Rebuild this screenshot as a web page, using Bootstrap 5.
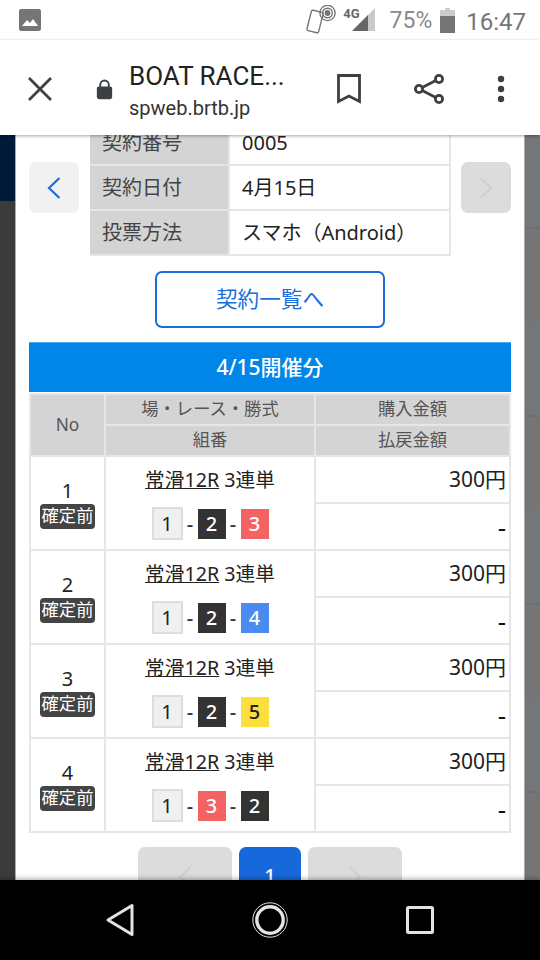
<!DOCTYPE html>
<html lang="ja">
<head>
<meta charset="utf-8">
<title>BOAT RACE</title>
<link href="https://cdn.jsdelivr.net/npm/bootstrap@5.3.0/dist/css/bootstrap.min.css" rel="stylesheet">
<style>
html,body{width:540px;height:960px;overflow:hidden;margin:0}
body{font-family:Roboto,"Noto Sans CJK JP",sans-serif;color:#222;background:#fff}
.shell{width:540px;height:960px}
.statusbar{height:40px;padding:0 14px 0 19px;color:#757575}
.status-pct{font-size:23px;color:#8a8a8a;margin:3px 0 0 14px}
.status-time{font-size:24px;color:#757575;margin:3px 0 0 11px}
.status-4g{font-size:13px;font-weight:700;line-height:1;color:#666;margin:-14px -8px 0 7px}
.toolbar{height:95px;position:relative;z-index:3;background:#fff;box-shadow:0 1px 3px rgba(0,0,0,.35);padding-top:2px}
.tb-close{width:26px;margin-left:27px}
.tb-lock{width:17px;margin-left:43px}
.tb-title{margin:8px 0 0 16px;width:170px}
.tb-title b{font-weight:400;font-size:26px;color:#222;display:block;line-height:30px;white-space:nowrap}
.tb-title span{font-size:20px;color:#333;display:block;line-height:34px}
.tb-actions{margin-left:auto;padding-right:35px;gap:52px}
.viewport{height:745px;overflow:hidden;position:relative}
.backdrop-left{width:15px;background:linear-gradient(#001a38 0 66px,#3b3b3b 66px);flex:none}
.backdrop-right{flex:1;background:repeating-linear-gradient(#74777a 0 92px,#6f6f6f 92px 94px,#757575 94px 188px)}
.sheet{width:510px;flex:none;background:#fff;border-left:1px solid #aaa;border-right:1px solid #aaa;padding:0 13px;font-family:"Noto Sans","Noto Sans CJK JP",sans-serif}
.contract-wrap{margin-top:-14px;height:135px}
.side-btn{width:50px;height:51px;border-radius:7px;background:#f1f1f1;margin-top:41px;flex:none}
.side-btn.off{background:#dcdcdc}
.contract-tbl{width:361px;margin:-2px 0 0 11px;border-collapse:collapse;font-size:20px;table-layout:fixed}
.contract-tbl th,.contract-tbl td{height:45px;padding:0 12px;font-weight:400;vertical-align:middle;border:2px solid #e6e6e6;line-height:1}
.contract-tbl th{width:139px;background:#d4d4d4;color:#444;border-left:0}
.contract-tbl td{color:#222}
.list-btn{display:block;width:230px;height:57px;margin:15px auto 14px;line-height:51px;font-size:21.6px;color:#1a6ddb;border:2px solid #1a6ddb;border-radius:7px;background:#fff;padding:0}
.day-head{height:50px;line-height:48px;background:#0086e8;border-top:1px solid #4aa8ee;color:#fff;font-size:21px;font-weight:500}
.bet-tbl{width:482px;margin:1px 0 0;border-collapse:collapse;table-layout:fixed;font-size:19.7px}
.bet-tbl th,.bet-tbl td{border:2px solid #e6e6e6;padding:0;font-weight:400;vertical-align:middle;text-align:center;line-height:1.2}
.bet-tbl thead th{background:#d4d4d4;color:#555;font-size:17.3px;height:31px}
.bet-tbl tbody td{height:47px}
.c-no{width:75px}.c-race{width:210px}
.no-val{font-size:20px;line-height:23px;margin-top:6px}
.state-tag{display:inline-block;background:#444;color:#fff;font-size:17.3px;line-height:24px;height:25px;border-radius:4px;width:55px;margin-top:2px;white-space:nowrap;overflow:hidden}
.race-link{color:#222;text-decoration:underline}
.race-line{line-height:24px;margin-top:2px;margin-bottom:15px}
.combo{height:33px}
.num{display:inline-block;width:28px;height:30px;line-height:30px;font-size:20px;font-weight:500;text-align:center}
.num.n1{width:31px;height:33px;line-height:29px;background:#f0f0f0;border:2px solid #ddd;color:#222;font-weight:400}
.num.n2{background:#333;color:#fff}
.num.n3{background:#f46363;color:#fff}
.num.n4{background:#4a8bf0;color:#fff}
.num.n5{background:#fbdf3a;color:#222}
.sep{width:15px;text-align:center;font-size:20px;line-height:30px;color:#333;font-weight:500}
.amt{text-align:right!important;padding-right:3px!important;font-size:21px;color:#222}
.amt-dash{font-weight:700;font-size:26px;color:#111;line-height:1!important}
.pager{gap:7px;margin-top:14px}
.pg-btn{height:60px;border-radius:7px;background:#dcdcdc;padding-top:16px;text-align:center}
.pg-side{width:94px}
.pg-cur{width:62px;background:#1668db;color:#fff;font-size:20px;font-weight:500;padding-top:14px}
.navbar-bottom{height:80px;background:#000;position:relative;z-index:3;box-shadow:0 -2px 4px rgba(0,0,0,.25)}
.nav-cell{width:150px}
</style>
</head>
<body>
<div class="shell d-flex flex-column">
  <div class="statusbar d-flex align-items-center">
    <svg width="22" height="22" viewBox="0 0 22 22"><rect width="22" height="22" rx="2" fill="#757575"/><path d="M3 17l5-6 3 3 3-4 5 7z" fill="#fff"/></svg>
    <div class="ms-auto d-flex align-items-center">
      <svg width="30" height="30" viewBox="0 0 30 30" fill="none" stroke="#757575" stroke-width="1.4"><rect x="3" y="6" width="12" height="21" rx="1.6" fill="#fff" transform="rotate(14 9 16.5)"/><circle cx="21.5" cy="8" r="7.6"/><circle cx="21.5" cy="8" r="4.8"/><circle cx="21.5" cy="8" r="2.2" fill="#757575"/></svg>
      <span class="status-4g">4G</span>
      <svg width="24" height="24" viewBox="0 0 24 24"><path d="M0 23L23 0v23z" fill="#c9c9c9"/><path d="M0 23L16 7v16z" fill="#666"/></svg>
      <span class="status-pct">75%</span>
      <svg class="ms-2" width="15" height="25" viewBox="0 0 15 25"><path d="M5 0h5v2h5v23H0V2h5z" fill="#ccc"/><path d="M0 8h15v17H0z" fill="#757575"/></svg>
      <span class="status-time">16:47</span>
    </div>
  </div>

  <div class="toolbar d-flex align-items-center">
    <svg class="tb-close" height="26" viewBox="0 0 26 26" fill="none" stroke="#3c4043" stroke-width="2.8"><path d="M2 2l22 22M24 2L2 24"/></svg>
    <svg class="tb-lock" height="22" viewBox="0 0 20 24"><path d="M5 10V7a5 5 0 0 1 10 0v3" fill="none" stroke="#3c4043" stroke-width="2.2"/><rect x="1" y="9" width="18" height="15" rx="2.5" fill="#3c4043"/></svg>
    <div class="tb-title"><b>BOAT RACE...</b><span>spweb.brtb.jp</span></div>
    <div class="tb-actions d-flex align-items-center">
      <svg width="24" height="30" viewBox="0 0 24 30" fill="none" stroke="#3c4043" stroke-width="2.8"><path d="M1.5 1.5h21v26L12 22 1.5 27.5z"/></svg>
      <svg width="32" height="32" viewBox="0 0 32 32" fill="none" stroke="#3c4043" stroke-width="2.8"><circle cx="26" cy="6" r="3.6"/><circle cx="6" cy="16" r="3.6"/><circle cx="26" cy="26" r="3.6"/><path d="M9.2 14.4L22.8 7.6M9.2 17.6l13.6 6.8"/></svg>
      <svg width="8" height="28" viewBox="0 0 8 28" fill="#3c4043"><circle cx="4" cy="4" r="3.2"/><circle cx="4" cy="14" r="3.2"/><circle cx="4" cy="24" r="3.2"/></svg>
    </div>
  </div>

  <div class="viewport d-flex">
    <div class="backdrop-left"></div>
    <div class="sheet">
      <div class="contract-wrap d-flex align-items-start">
        <div class="side-btn d-flex align-items-center justify-content-center">
          <svg width="14" height="22" viewBox="0 0 14 22" fill="none" stroke="#1a6ddb" stroke-width="2.2"><path d="M12.5 1L2 11l10.5 10"/></svg>
        </div>
        <table class="contract-tbl">
          <tr><th>契約番号</th><td>0005</td></tr>
          <tr><th>契約日付</th><td>4月15日</td></tr>
          <tr><th>投票方法</th><td>スマホ（Android）</td></tr>
        </table>
        <div class="side-btn off d-flex align-items-center justify-content-center ms-auto">
          <svg width="14" height="22" viewBox="0 0 14 22" fill="none" stroke="#d0d0d0" stroke-width="2.2"><path d="M1.5 1L12 11 1.5 21"/></svg>
        </div>
      </div>

      <a class="list-btn btn text-center" href="#">契約一覧へ</a>

      <div class="day-head text-center">4/15開催分</div>
      <table class="bet-tbl">
        <thead>
          <tr><th class="c-no" rowspan="2">No</th><th class="c-race">場・レース・勝式</th><th>購入金額</th></tr>
          <tr><th>組番</th><th>払戻金額</th></tr>
        </thead>
        <tbody>
          <tr><td rowspan="2"><div class="no-val">1</div><span class="state-tag">確定前</span></td>
            <td rowspan="2"><div class="race-line"><a class="race-link" href="#">常滑12R</a> 3連単</div>
              <div class="combo d-flex justify-content-center align-items-center"><span class="num n1">1</span><span class="sep">-</span><span class="num n2">2</span><span class="sep">-</span><span class="num n3">3</span></div></td>
            <td class="amt">300円</td></tr>
          <tr><td class="amt amt-dash">-</td></tr>
          <tr><td rowspan="2"><div class="no-val">2</div><span class="state-tag">確定前</span></td>
            <td rowspan="2"><div class="race-line"><a class="race-link" href="#">常滑12R</a> 3連単</div>
              <div class="combo d-flex justify-content-center align-items-center"><span class="num n1">1</span><span class="sep">-</span><span class="num n2">2</span><span class="sep">-</span><span class="num n4">4</span></div></td>
            <td class="amt">300円</td></tr>
          <tr><td class="amt amt-dash">-</td></tr>
          <tr><td rowspan="2"><div class="no-val">3</div><span class="state-tag">確定前</span></td>
            <td rowspan="2"><div class="race-line"><a class="race-link" href="#">常滑12R</a> 3連単</div>
              <div class="combo d-flex justify-content-center align-items-center"><span class="num n1">1</span><span class="sep">-</span><span class="num n2">2</span><span class="sep">-</span><span class="num n5">5</span></div></td>
            <td class="amt">300円</td></tr>
          <tr><td class="amt amt-dash">-</td></tr>
          <tr><td rowspan="2"><div class="no-val">4</div><span class="state-tag">確定前</span></td>
            <td rowspan="2"><div class="race-line"><a class="race-link" href="#">常滑12R</a> 3連単</div>
              <div class="combo d-flex justify-content-center align-items-center"><span class="num n1">1</span><span class="sep">-</span><span class="num n3">3</span><span class="sep">-</span><span class="num n2">2</span></div></td>
            <td class="amt">300円</td></tr>
          <tr><td class="amt amt-dash">-</td></tr>
        </tbody>
      </table>

      <div class="pager d-flex justify-content-center">
        <div class="pg-btn pg-side"><svg width="14" height="22" viewBox="0 0 14 22" fill="none" stroke="#d0d0d0" stroke-width="2.2"><path d="M12.5 1L2 11l10.5 10"/></svg></div>
        <div class="pg-btn pg-cur">1</div>
        <div class="pg-btn pg-side"><svg width="14" height="22" viewBox="0 0 14 22" fill="none" stroke="#d0d0d0" stroke-width="2.2"><path d="M1.5 1L12 11 1.5 21"/></svg></div>
      </div>
    </div>
    <div class="backdrop-right"></div>
  </div>

  <div class="navbar-bottom d-flex align-items-center justify-content-center">
    <div class="nav-cell d-flex justify-content-center"><svg width="30" height="34" viewBox="0 0 30 34" fill="none" stroke="#e4e4e4" stroke-width="3" stroke-linejoin="round"><path d="M27 2.5v29L3 17z"/></svg></div>
    <div class="nav-cell d-flex justify-content-center"><svg width="36" height="36" viewBox="0 0 36 36" fill="none" stroke="#e4e4e4"><circle cx="18" cy="18" r="17.2" stroke-width="1"/><circle cx="18" cy="18" r="13.2" stroke-width="3.4"/></svg></div>
    <div class="nav-cell d-flex justify-content-center"><svg width="28" height="28" viewBox="0 0 28 28" fill="none" stroke="#e4e4e4" stroke-width="3" stroke-linejoin="round"><rect x="1.5" y="1.5" width="25" height="25" rx="1"/></svg></div>
  </div>
</div>
<script src="https://cdn.jsdelivr.net/npm/bootstrap@5.3.0/dist/js/bootstrap.bundle.min.js"></script>
</body>
</html>
